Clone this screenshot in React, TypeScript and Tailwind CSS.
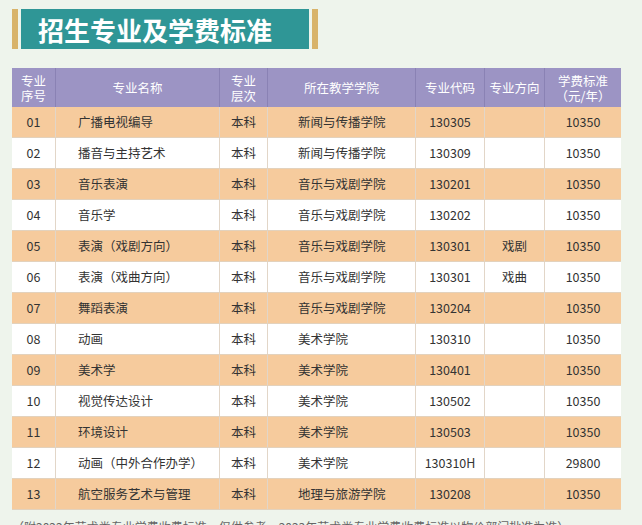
const rows = [
  ["01", "广播电视编导", "本科", "新闻与传播学院", "130305", "", "10350"],
  ["02", "播音与主持艺术", "本科", "新闻与传播学院", "130309", "", "10350"],
  ["03", "音乐表演", "本科", "音乐与戏剧学院", "130201", "", "10350"],
  ["04", "音乐学", "本科", "音乐与戏剧学院", "130202", "", "10350"],
  ["05", "表演（戏剧方向）", "本科", "音乐与戏剧学院", "130301", "戏剧", "10350"],
  ["06", "表演（戏曲方向）", "本科", "音乐与戏剧学院", "130301", "戏曲", "10350"],
  ["07", "舞蹈表演", "本科", "音乐与戏剧学院", "130204", "", "10350"],
  ["08", "动画", "本科", "美术学院", "130310", "", "10350"],
  ["09", "美术学", "本科", "美术学院", "130401", "", "10350"],
  ["10", "视觉传达设计", "本科", "美术学院", "130502", "", "10350"],
  ["11", "环境设计", "本科", "美术学院", "130503", "", "10350"],
  ["12", "动画（中外合作办学）", "本科", "美术学院", "130310H", "", "29800"],
  ["13", "航空服务艺术与管理", "本科", "地理与旅游学院", "130208", "", "10350"],
]

const cols = "grid-cols-[44px_164px_48px_148px_69px_60px_76px]"

export default function App() {
  return (
    <div
      className="h-[525px] w-[642px] overflow-hidden bg-[#eef4ec] text-[#333]"
      style={{ fontFamily: '"Noto Sans CJK SC", "Noto Sans", sans-serif' }}
    >
      <div className="flex items-stretch pl-[12px] pt-[9px]">
        <div className="w-[6px] bg-[#d8b36a]" />
        <div className="ml-[3px] flex h-[40px] w-[288px] items-center bg-[#2f9696] pl-[17px] text-[26px] font-bold text-white">
          招生专业及学费标准
        </div>
        <div className="ml-[3px] w-[6px] bg-[#d8b36a]" />
      </div>
      <div className="ml-[12px] mt-[19px] w-[609px] text-[12.5px]">
        <div className={`grid ${cols} h-[39px] bg-[#9c94c4] text-[12.5px] leading-[15px] text-white`}>
          {["专业\n序号", "专业名称", "专业\n层次", "所在教学学院", "专业代码", "专业方向", "学费标准\n（元/年）"].map((h, i) => (
            <div key={i} className="flex items-center justify-center whitespace-pre border-r border-[#8a82b4] text-center last:border-r-0">
              {h}
            </div>
          ))}
        </div>
        {rows.map((r, i) => (
          <div
            key={i}
            className={`grid ${cols} h-[31px] border-b border-[#e3d2bd] ${i % 2 === 0 ? "bg-[#f6cb9d]" : "bg-white"}`}
          >
            {r.map((c, j) => (
              <div
                key={j}
                className={`flex items-center border-r border-[#e2d6c8] last:border-r-0 ${
                  j === 1 ? "pl-[22px]" : j === 3 ? "pl-[30px]" : "justify-center"
                }`}
              >
                {c}
              </div>
            ))}
          </div>
        ))}
        <div className="mt-[8px] whitespace-nowrap text-[12px] text-[#666]">
          （附2022年艺术类专业学费收费标准，仅供参考，2023年艺术类专业学费收费标准以物价部门批准为准）
        </div>
      </div>
    </div>
  )
}
